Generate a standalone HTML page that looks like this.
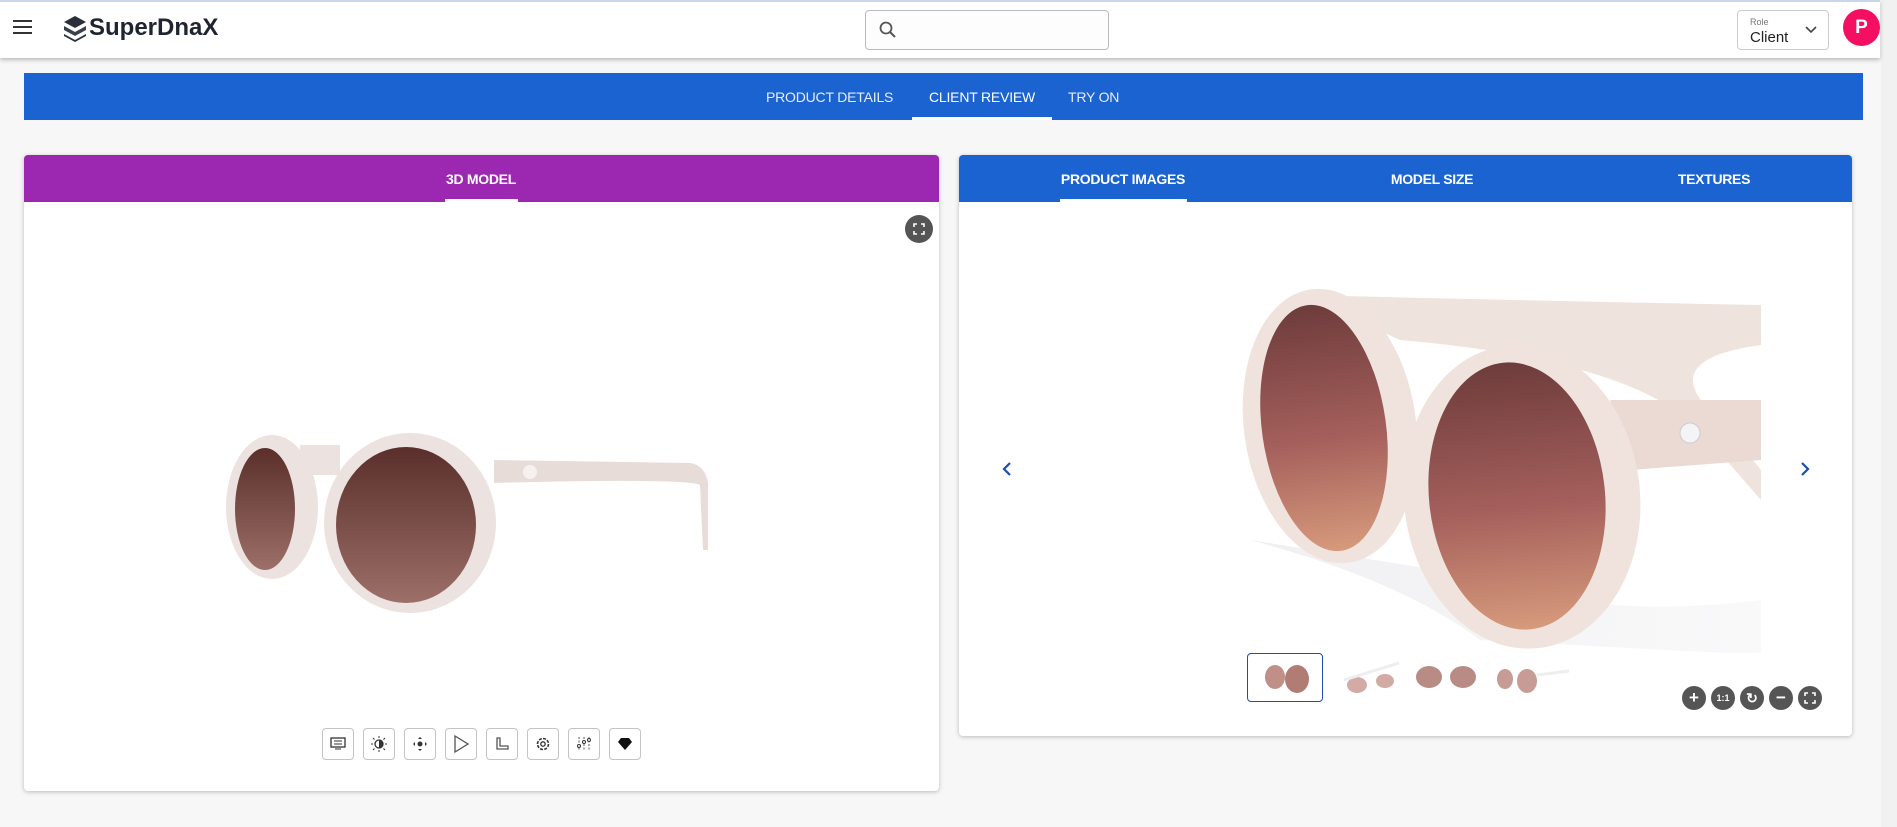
<!DOCTYPE html>
<html><head><meta charset="utf-8"><style>
*{box-sizing:border-box;margin:0;padding:0}
body{width:1897px;height:827px;background:#f7f7f7;font-family:"Liberation Sans",sans-serif;position:relative;overflow:hidden}
.abs{position:absolute}
.hdr{left:0;top:0;width:1880px;height:58px;background:#fff;border-top:2px solid #c9d6ee;box-shadow:0 2px 4px rgba(0,0,0,.25)}
.sb{left:1881px;top:0;width:16px;height:827px;background:#f1f1f1}
.nav{left:24px;top:73px;width:1839px;height:47px;background:#1a63d0;color:#fff;font-size:14px;letter-spacing:-0.2px}
.nav span{position:absolute;top:16px}
.card{background:#fff;box-shadow:0 1px 4px rgba(0,0,0,.25);border-radius:4px;overflow:hidden}
.th{position:absolute;top:0;left:0;right:0;height:47px;color:#fff;font-size:14px;font-weight:bold;letter-spacing:-0.3px}
.th span{position:absolute;top:16px;transform:translateX(-50%)}
.ul{position:absolute;height:2px;background:#fff;bottom:0}
.tb{position:absolute;top:573px;width:32px;height:32px;border:1px solid #c4c4c4;border-radius:4px;background:#fff;display:flex;align-items:center;justify-content:center}
.zc{position:absolute;top:531px;width:24px;height:24px;border-radius:50%;background:#555;color:#fff;font-size:9px;font-weight:bold;display:flex;align-items:center;justify-content:center}
</style></head><body>
<div class="abs sb"></div>
<div class="abs hdr">
 <div class="abs" style="left:13px;top:18px;width:19px">
  <div style="height:2px;background:#333;margin-bottom:4px"></div><div style="height:2px;background:#333;margin-bottom:4px"></div><div style="height:2px;background:#333"></div></div>
 <svg class="abs" style="left:62px;top:13px" width="26" height="28" viewBox="0 0 26 28"><path d="M13 1 L24 7 L13 13 L2 7Z" fill="#2a2f3a"/><path d="M2 11 L13 17 L24 11 L24 15 L13 21 L2 15Z" fill="#3a404c"/><path d="M2 19 L13 25 L24 19 L24 21 L13 27 L2 21Z" fill="#2a2f3a"/></svg>
 <div class="abs" style="left:89px;top:12px;font-size:24px;font-weight:bold;color:#1f2430">SuperDnaX</div>
 <div class="abs" style="left:865px;top:8px;width:244px;height:40px;border:1px solid #bbb;border-radius:4px;background:#fdfdfd">
  <svg class="abs" style="left:12px;top:9px" width="20" height="20" viewBox="0 0 20 20"><circle cx="8" cy="8" r="5.5" fill="none" stroke="#555" stroke-width="1.8"/><path d="M12 12 L17 17" stroke="#555" stroke-width="2"/></svg></div>
 <div class="abs" style="left:1737px;top:8px;width:92px;height:40px;border:1px solid #ccc;border-radius:4px">
  <div class="abs" style="left:12px;top:6px;font-size:9px;color:#777">Role</div>
  <div class="abs" style="left:12px;top:18px;font-size:15px;color:#222">Client</div>
  <svg class="abs" style="left:66px;top:14px" width="14" height="10" viewBox="0 0 14 10"><path d="M2 2 L7 7 L12 2" fill="none" stroke="#444" stroke-width="1.6"/></svg></div>
 <div class="abs" style="left:1843px;top:7px;width:37px;height:37px;border-radius:50%;background:#f50f63;color:#fff;font-size:19px;font-weight:bold;text-align:center;line-height:37px">P</div>
</div>
<div class="abs nav">
 <span style="left:742px;color:#e6ecf8">PRODUCT DETAILS</span>
 <span style="left:905px">CLIENT REVIEW</span>
 <span style="left:1044px;color:#e6ecf8">TRY ON</span>
 <div class="ul" style="left:888px;width:140px;height:3px"></div>
</div>

<div class="abs card" style="left:24px;top:155px;width:915px;height:636px">
 <div class="th" style="background:#9c27b0"><span style="left:457px">3D MODEL</span><div class="ul" style="left:421px;width:73px;height:3px"></div></div>
 <div class="abs" style="left:881px;top:60px;width:28px;height:28px;border-radius:50%;background:#555"><svg width="28" height="28" viewBox="0 0 28 28"><path d="M9 12V9h3M16 9h3v3M19 16v3h-3M12 19H9v-3" fill="none" stroke="#fff" stroke-width="1.6"/></svg></div>
 <svg class="abs" style="left:176px;top:260px" width="520" height="200" viewBox="200 410 520 200">
  <defs><linearGradient id="lg" x1="0" y1="0" x2="0" y2="1"><stop offset="0" stop-color="#5a2e2a"/><stop offset="1" stop-color="#9c7068"/></linearGradient></defs>
  <path d="M494 455 L690 458 Q705 460 708 478 L708 545 L703 545 L700 480 Q690 473 494 478Z" fill="#e8dcd9"/>
  <path d="M300 440 L340 440 L340 470 L300 470Z" fill="#ece2e0"/>
  <ellipse cx="272" cy="502" rx="46" ry="72" fill="#ece2e0"/>
  <ellipse cx="410" cy="518" rx="86" ry="90" fill="#ece2e0"/>
  <ellipse cx="265" cy="504" rx="30" ry="61" fill="url(#lg)"/>
  <ellipse cx="406" cy="520" rx="70" ry="78" fill="url(#lg)"/>
  <circle cx="530" cy="467" r="7" fill="#f6f1f0"/>
 </svg>
 <div class="tb" style="left:298px"><svg width="16" height="14"><rect x="1" y="1" width="14" height="9" fill="none" stroke="#333" stroke-width="1.3"/><path d="M4 4h8M4 7h8M5 12h6" stroke="#333"/></svg></div>
 <div class="tb" style="left:339px"><svg width="16" height="16"><circle cx="8" cy="8" r="4" fill="none" stroke="#333" stroke-width="1.3"/><path d="M8 4a4 4 0 0 1 0 8z" fill="#333"/><path d="M8 0v2M8 14v2M0 8h2M14 8h2M2 2l1.5 1.5M12.5 12.5L14 14M14 2l-1.5 1.5M2 14l1.5-1.5" stroke="#333"/></svg></div>
 <div class="tb" style="left:380px"><svg width="16" height="16"><circle cx="8" cy="8" r="2.5" fill="#333"/><path d="M8 1l-2 2h4zM8 15l-2-2h4zM1 8l2-2v4zM15 8l-2-2v4z" fill="#333"/></svg></div>
 <div class="tb" style="left:421px"><svg width="18" height="20"><path d="M3 2 L16 10 L3 18Z" fill="none" stroke="#555" stroke-width="1.3"/></svg></div>
 <div class="tb" style="left:462px"><svg width="16" height="16"><path d="M3 2v11h11v-3H6V2z" fill="none" stroke="#555" stroke-width="1.3"/></svg></div>
 <div class="tb" style="left:503px"><svg width="16" height="16"><circle cx="8" cy="8" r="5.5" fill="none" stroke="#333" stroke-width="1.6" stroke-dasharray="3 1.3"/><circle cx="8" cy="8" r="2.2" fill="none" stroke="#333" stroke-width="1.3"/></svg></div>
 <div class="tb" style="left:544px"><svg width="16" height="16"><path d="M3 1v14M8 1v14M13 1v14" stroke="#555" stroke-dasharray="2 1.5"/><circle cx="3" cy="10" r="1.5" fill="#fff" stroke="#333"/><circle cx="8" cy="6" r="1.5" fill="#fff" stroke="#333"/><circle cx="13" cy="4" r="1.5" fill="#fff" stroke="#333"/></svg></div>
 <div class="tb" style="left:585px"><svg width="16" height="14"><path d="M4 1h8l3 4-7 8-7-8z" fill="#111"/></svg></div>
</div>

<div class="abs card" style="left:959px;top:155px;width:893px;height:581px">
 <div class="th" style="background:#1a63d0"><span style="left:164px">PRODUCT IMAGES</span><span style="left:473px">MODEL SIZE</span><span style="left:755px">TEXTURES</span><div class="ul" style="left:101px;width:127px;height:3px"></div></div>
 <svg class="abs" style="left:40px;top:305px" width="16" height="18"><path d="M11 3 L5 9 L11 15" fill="none" stroke="#1a4fb0" stroke-width="2.2"/></svg>
 <svg class="abs" style="left:838px;top:305px" width="16" height="18"><path d="M5 3 L11 9 L5 15" fill="none" stroke="#1a4fb0" stroke-width="2.2"/></svg>
 <svg class="abs" style="left:263px;top:93px" width="540" height="405" viewBox="1222 248 540 405">
  <defs><linearGradient id="rg" x1="0" y1="0" x2="0" y2="1"><stop offset="0" stop-color="#6e3c3c"/><stop offset=".55" stop-color="#a5605c"/><stop offset="1" stop-color="#d69a7c"/></linearGradient>
  <linearGradient id="sh" x1="0" y1="0" x2="1" y2="0"><stop offset="0" stop-color="#ececef"/><stop offset="1" stop-color="#f8f8f9"/></linearGradient></defs>
  <path d="M1250 540 Q1400 580 1480 640 L1761 655 L1761 600 Q1600 620 1500 580Z" fill="url(#sh)" opacity=".8"/>
  <path d="M1300 295 Q1500 300 1761 305 L1761 345 Q1650 360 1720 420 L1761 470 L1761 500 L1700 430 Q1630 360 1400 340Z" fill="#efe3dd"/>
  <path d="M1610 400 L1761 400 L1761 460 L1630 470Z" fill="#eadad3"/>
  <ellipse cx="1330" cy="426" rx="86" ry="138" transform="rotate(-8 1330 426)" fill="#f0e3dd"/>
  <ellipse cx="1522" cy="497" rx="118" ry="152" transform="rotate(-6 1522 497)" fill="#f0e3dd"/>
  <ellipse cx="1324" cy="428" rx="62" ry="124" transform="rotate(-8 1324 428)" fill="url(#rg)"/>
  <ellipse cx="1517" cy="496" rx="88" ry="134" transform="rotate(-6 1517 496)" fill="url(#rg)"/>
  <circle cx="1690" cy="433" r="10" fill="#f4f4f6" stroke="#ccc"/>
 </svg>
 <div class="abs" style="left:288px;top:498px;width:76px;height:49px;border:1px solid #1a4fb0;border-radius:4px"></div>
 <svg class="abs" style="left:290px;top:500px" width="330" height="45">
  <ellipse cx="26" cy="22" rx="10" ry="12" fill="#c09088"/><ellipse cx="48" cy="24" rx="12" ry="14" fill="#b07c74"/>
  <ellipse cx="108" cy="30" rx="10" ry="8" fill="#d2aca4"/><ellipse cx="136" cy="26" rx="9" ry="7" fill="#d2aca4"/><path d="M95 25 L150 8" stroke="#eee" stroke-width="3"/>
  <ellipse cx="180" cy="22" rx="13" ry="11" fill="#b88c84"/><ellipse cx="214" cy="22" rx="13" ry="11" fill="#b88c84"/>
  <ellipse cx="256" cy="24" rx="8" ry="10" fill="#c69c94"/><ellipse cx="278" cy="26" rx="10" ry="12" fill="#c69c94"/><path d="M288 20 L320 16" stroke="#eee" stroke-width="3"/>
 </svg>
 <div class="zc" style="left:723px;font-size:17px">+</div>
 <div class="zc" style="left:752px">1:1</div>
 <div class="zc" style="left:781px;font-size:14px">↻</div>
 <div class="zc" style="left:810px;font-size:17px">−</div>
 <div class="zc" style="left:839px"><svg width="14" height="14"><path d="M2 5V2h3M9 2h3v3M12 9v3H9M5 12H2V9" fill="none" stroke="#fff" stroke-width="1.6"/></svg></div>
</div>
</body></html>
